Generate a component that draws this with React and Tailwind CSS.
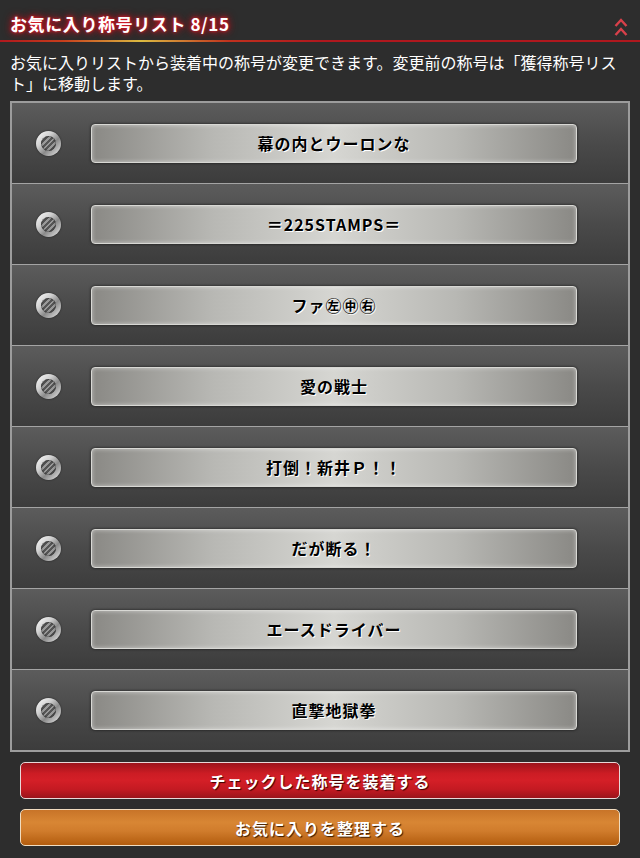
import React from "react";

const titles = [
  "幕の内とウーロンな",
  "＝225STAMPS＝",
  "ファ㊧㊥㊨",
  "愛の戦士",
  "打倒！新井Ｐ！！",
  "だが断る！",
  "エースドライバー",
  "直撃地獄拳",
];

function Radio() {
  return (
    <div className="w-[25px] h-[25px] shrink-0 rounded-full bg-[linear-gradient(135deg,#ffffff_0%,#d0d0d0_35%,#8a8a8a_60%,#eeeeee_100%)] shadow-[0_0_2px_rgba(0,0,0,0.6)] flex items-center justify-center">
      <div className="w-[15px] h-[15px] rounded-full bg-[repeating-linear-gradient(135deg,#555555_0px,#555555_2px,#999999_2px,#999999_4px)] shadow-[inset_0_0_2px_rgba(0,0,0,0.8)]" />
    </div>
  );
}

export default function App() {
  return (
    <div
      className="w-[640px] h-[858px] bg-[#2d2d2d] text-white overflow-hidden"
      style={{ fontFamily: '"Noto Sans CJK JP", "Noto Sans", sans-serif' }}
    >
      <div className="relative h-[40px] flex items-center pl-[10px] pt-[7px]">
        <span className="text-[17px] tracking-[0.6px] font-bold leading-[24px] text-white [text-shadow:0_0_3px_#e8202e,0_0_6px_#d01020,0_0_10px_#a01018]">
          お気に入り称号リスト 8/15
        </span>
        <svg className="absolute left-[613px] top-[16px]" width="16" height="22" viewBox="0 0 16 22">
          <polyline points="2.5,10 8,4 13.5,10" fill="none" stroke="#d8404a" strokeWidth="2.4" />
          <polyline points="2.5,19 8,13 13.5,19" fill="none" stroke="#d8404a" strokeWidth="2.4" />
        </svg>
      </div>
      <div className="h-[2px] bg-[linear-gradient(90deg,#b0181e_0%,#c8401e_10%,#dcbc42_22%,#c0301e_36%,#b0181e_50%,#b0181e_100%)]" />
      <p className="mt-[10px] px-[10px] text-[16px] leading-[21px] text-white">
        お気に入りリストから装着中の称号が変更できます。変更前の称号は「獲得称号リスト」に移動します。
      </p>
      <div className="mx-[10px] mt-[7px] border-2 border-[#9c9c9c]">
        {titles.map((t, i) => (
          <div
            key={i}
            className={`flex items-center pl-[24px] bg-[linear-gradient(180deg,#5c5c5c_0%,#4a4a4a_50%,#3c3c3c_100%)] ${
              i > 0 ? "border-t border-[#a4a4a4] h-[81px]" : "h-[80px]"
            }`}
          >
            <Radio />
            <div className="ml-[30px] w-[486px] h-[39px] rounded-[4px] border border-[#d8d8d4] bg-[linear-gradient(90deg,#8a8985_0%,#b8b8b4_25%,#d6d6d2_50%,#b8b8b4_75%,#8a8985_100%)] shadow-[0_0_3px_rgba(0,0,0,0.7),inset_0_0_4px_rgba(255,255,255,0.5)] flex items-center justify-center">
              <span className="text-[16px] tracking-[1px] font-bold text-black [text-shadow:1px_1px_0_#ffffff]">
                {t}
              </span>
            </div>
          </div>
        ))}
      </div>
      <div className="mx-[20px] mt-[10px] flex flex-col gap-[10px]">
        <div className="h-[37px] rounded-[5px] border border-[#e8d8d8] bg-[linear-gradient(180deg,#9c141c_0%,#cc1c24_30%,#d41f27_50%,#c41a22_75%,#9a141b_100%)] flex items-center justify-center">
          <span className="text-[16px] tracking-[1px] font-bold text-white [text-shadow:1px_1px_1px_#3a0000]">
            チェックした称号を装着する
          </span>
        </div>
        <div className="h-[37px] rounded-[5px] border border-[#f0dcc0] bg-[linear-gradient(180deg,#c87428_0%,#d88634_35%,#d07c2c_60%,#b25c0e_100%)] flex items-center justify-center">
          <span className="text-[16px] tracking-[1px] font-bold text-white [text-shadow:1px_1px_1px_#3a1a00]">
            お気に入りを整理する
          </span>
        </div>
      </div>
    </div>
  );
}
